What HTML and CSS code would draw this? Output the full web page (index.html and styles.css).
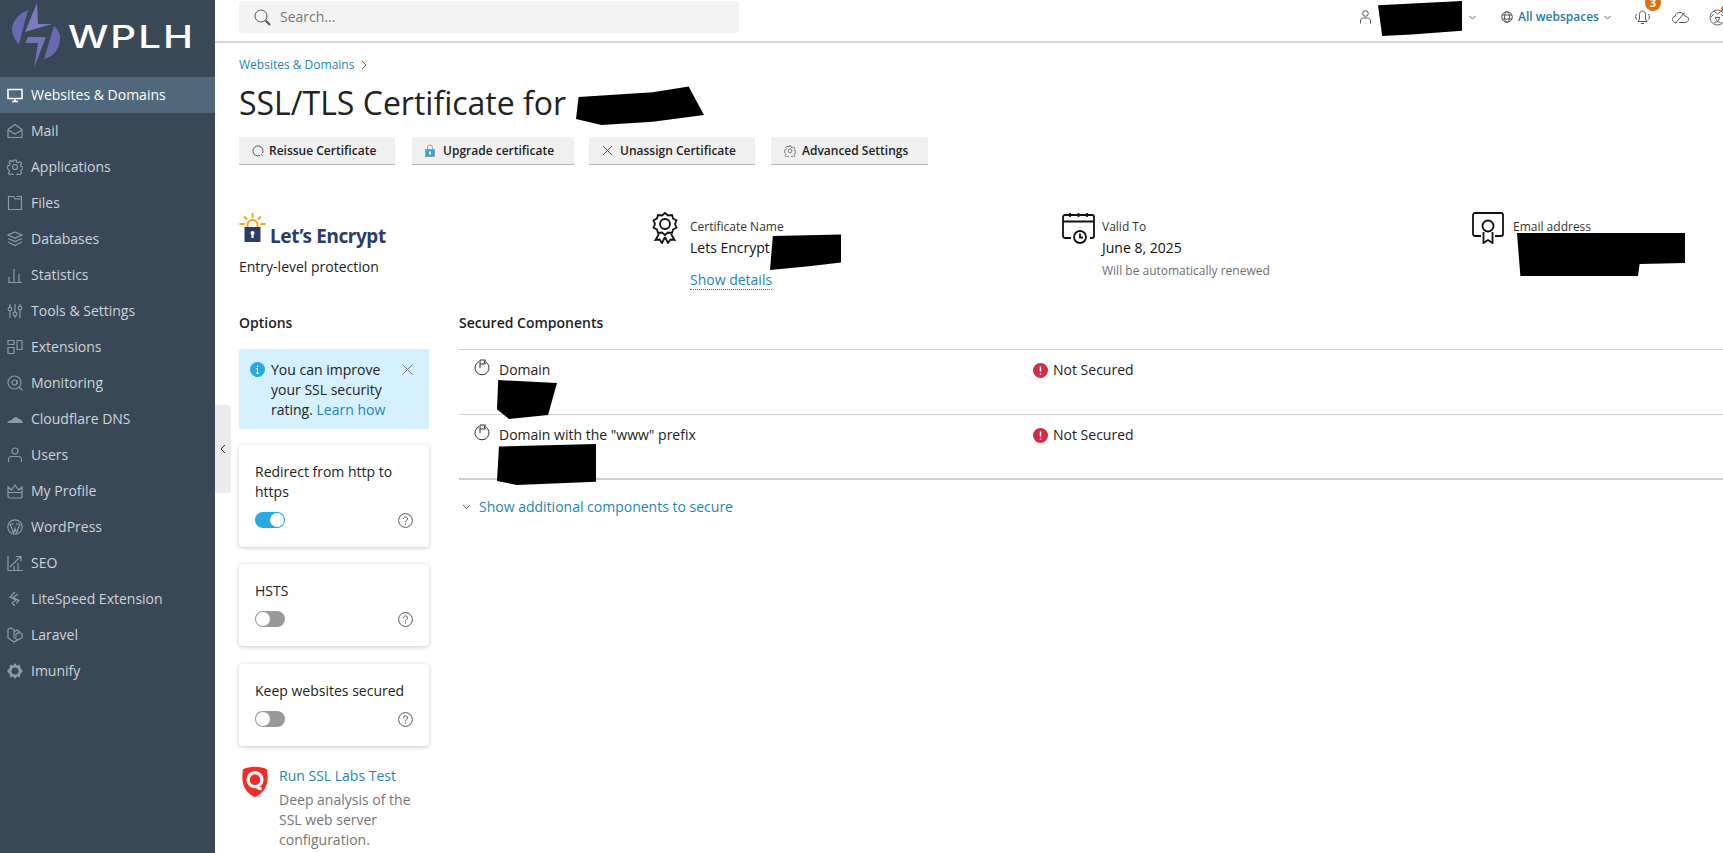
FILE: index.html
```html
<!DOCTYPE html>
<html lang="en">
<head>
    <meta charset="UTF-8">
    <meta name="viewport" content="width=device-width, initial-scale=1.0">
    <title>SSL/TLS Certificate</title>
    <link rel="stylesheet" href="styles.css">
</head>
<body>
    <aside class="sidebar">
        <div class="logo">
            <svg class="logo-mark" width="56" height="68" viewBox="0 0 56 68">
                <path d="M17 7C7 11 1 19 1 27c0 5 3 11 7 14L17 7z" fill="#6a68b0"/>
                <path d="M43 23c4 3 6 7 6 12 0 11-7 19-16 21l10-33z" fill="#6a68b0"/>
                <path d="M26 0l1 21h14L14 29 26 0z" fill="#7d7abb"/>
                <path d="M17 34h18L23 65l4-25H14z" fill="#7471b5"/>
            </svg>
            <span class="logo-text">WPLH</span>
        </div>
        <nav class="nav">
            <a class="nav-item active"><svg viewBox="0 0 16 16"><path d="M1 2.5h14v9H1zM5 14.5h6M8 12v2"/></svg>Websites &amp; Domains</a>
            <a class="nav-item"><svg viewBox="0 0 16 16"><path d="M1 6.5L8 1.5l7 5v8H1zM1 7l7 4 7-4"/></svg>Mail</a>
            <a class="nav-item"><svg viewBox="0 0 16 16"><circle cx="8" cy="8" r="2.5"/><path d="M6.8 1h2.4l.4 2 1.5.7 1.8-1 1.6 1.7-1 1.7.7 1.5 1.8.5v2.4l-1.8.5-.7 1.5 1 1.7-1.6 1.7-1.8-1-1.5.7-.4 1.8H6.8l-.4-1.8-1.5-.7-1.8 1-1.6-1.7 1-1.7-.7-1.5L.5 9.3V6.9l1.8-.5.7-1.5-1-1.7 1.6-1.7 1.8 1 1.5-.7z"/></svg>Applications</a>
            <a class="nav-item"><svg viewBox="0 0 16 16"><path d="M1.5 1.5h5L8 4h6.5v10.500h-13zM9.500 1.500h5v2"/></svg>Files</a>
            <a class="nav-item"><svg viewBox="0 0 16 16"><path d="M8 1l7 3-7 3-7-3zM1 7.5l7 3 7-3M1 11l7 3.500 7-3.500"/></svg>Databases</a>
            <a class="nav-item"><svg viewBox="0 0 16 16"><path d="M2 15v-5M7 15V2M12 15V7M1 15.500h14"/></svg>Statistics</a>
            <a class="nav-item"><svg viewBox="0 0 16 16"><path d="M3 1v3M3 8v7M8 1v8M8 13v2M13 1v2M13 7v8"/><circle cx="3" cy="6" r="1.8"/><circle cx="8" cy="11" r="1.8"/><circle cx="13" cy="5" r="1.8"/></svg>Tools &amp; Settings</a>
            <a class="nav-item"><svg viewBox="0 0 16 16"><path d="M1 1.500h6v4H1zM1 8.500h6v6H1zM10 1.500h5v9h-5z"/></svg>Extensions</a>
            <a class="nav-item"><svg viewBox="0 0 16 16"><circle cx="7.5" cy="7.5" r="6.5"/><circle cx="7.5" cy="7.5" r="2.5"/><path d="M10 5v4M12 12l3.500 3.500"/></svg>Monitoring</a>
            <a class="nav-item"><svg viewBox="0 0 16 16"><path class="fill" d="M0 12c1-2 3-3 5-3 1-3 5-4 7-1 2 0 3.500 2 4 4z"/></svg>Cloudflare DNS</a>
            <a class="nav-item"><svg viewBox="0 0 16 16"><circle cx="8" cy="4" r="3"/><path d="M1.500 15v-2.500c0-2 1.500-3 3.500-3h6c2 0 3.500 1 3.500 3V15"/></svg>Users</a>
            <a class="nav-item"><svg viewBox="0 0 16 16"><path d="M1 4l3.500 3L8 2l3.500 5L15 4v9c0 1-1 2-2 2H3c-1 0-2-1-2-2zM1 9.500h14"/></svg>My Profile</a>
            <a class="nav-item"><svg viewBox="0 0 16 16"><circle cx="8" cy="8" r="7.2"/><path d="M3 5l3.500 9L8 9.500 9.500 14 13 5M2.500 5h4M9 5h4"/></svg>WordPress</a>
            <a class="nav-item"><svg viewBox="0 0 16 16"><path d="M1 1v14.500h15M3 12l10-10M9 1.500h5v5M7 15v-4M11 15V8"/></svg>SEO</a>
            <a class="nav-item"><svg viewBox="0 0 16 16"><path d="M8 1L3 6l6 3-4 3 3 3M11 3L6 6.500l6 3-3 3"/></svg>LiteSpeed Extension</a>
            <a class="nav-item"><svg viewBox="0 0 16 16"><path d="M1 2l3-1 3 1.500v8l4 2.500 4-2.500V7l-3-1.500L9 7v3M1 2v9l6 4 4-2M7 5l3-2 3 2"/></svg>Laravel</a>
            <a class="nav-item"><svg viewBox="0 0 16 16"><path class="fill" d="M8 0l1.800 2.500 3-.8.500 3L16 8l-2.700 3.300-.5 3-3-.8L8 16l-1.800-2.500-3 .8-.5-3L0 8l2.700-3.300.5-3 3 .8z"/><circle class="hole" cx="8" cy="8" r="3.5"/></svg>Imunify</a>
        </nav>
    </aside>

    <button class="collapse" aria-label="Collapse">
        <svg width="6" height="10" viewBox="0 0 6 10"><path d="M5 1L1 5l4 4"/></svg>
    </button>

    <div class="main">
        <header class="topbar">
            <div class="search">
                <svg width="17" height="17" viewBox="0 0 17 17"><circle cx="7" cy="7" r="6"/><path d="M11.500 11.500l4.500 4.500" stroke-width="2"/></svg>
                <span>Search...</span>
            </div>
            <div class="top-actions">
                <div class="user">
                    <svg width="11" height="14" viewBox="0 0 11 14"><circle cx="5.5" cy="3.5" r="2.8"/><path d="M.5 13.500v-2.500c0-2 1.500-3 3-3h4c1.500 0 3 1 3 3v2.500"/></svg>
                    <span class="user-name"><i class="scribble scribble-user"></i></span>
                    <svg class="chev" width="7" height="5" viewBox="0 0 7 5"><path d="M.5 1l3 3 3-3"/></svg>
                </div>
                <a class="webspaces">
                    <svg width="12" height="12" viewBox="0 0 12 12"><circle cx="6" cy="6" r="5.3"/><ellipse cx="6" cy="6" rx="2.5" ry="5.3"/><path d="M1 4h10M1 8h10"/></svg>
                    All webspaces
                    <svg class="chev" width="7" height="5" viewBox="0 0 7 5"><path d="M.5 1l3 3 3-3"/></svg>
                </a>
                <div class="bell">
                    <svg width="17" height="15" viewBox="0 0 17 15"><path d="M8.500 1c-2 0-3 1.500-3 3.500V9l-1.500 2.500h9L11.500 9V4.500c0-2-1-3.500-3-3.500zM7 13.500h3M2.500 4C1.300 5.500 1.300 8 2.500 9.500M14.500 4c1.200 1.500 1.200 4 0 5.500"/></svg>
                    <span class="badge">3</span>
                </div>
                <svg class="top-icon" width="17" height="13" viewBox="0 0 17 13"><path d="M5 11.500H4c-2 0-3.500-1.300-3.500-3s1-2.800 2.500-3C3.500 3 5.500 1.500 8 1.500c2.500 0 4 1.500 4.500 3.500 2.500 0 4 1.500 4 3.300s-1.500 3.200-3.500 3.200H7M3.500 12.500l9-11"/></svg>
                <div class="avatar">
                    <svg width="17" height="17" viewBox="0 0 17 17"><circle cx="8.5" cy="8.5" r="7.5"/><path d="M5 2l3.500 3L12 2M2 8l3-3M15 8l-3-3M6 8.500l2.500 4 2.500-4zM5 14l3.500-1.500L12 14"/></svg>
                    <i class="avatar-dot"></i>
                </div>
            </div>
        </header>

        <main class="content">
            <div class="crumbs">
                <a>Websites &amp; Domains</a>
                <svg width="6" height="10" viewBox="0 0 6 10"><path d="M1 1l4 4-4 4"/></svg>
            </div>
            <h1 class="title">SSL/TLS Certificate for <i class="scribble scribble-title"></i></h1>

            <div class="toolbar">
                <button class="btn btn-reissue">
                    <svg width="12" height="12" viewBox="0 0 12 12"><path d="M8 10.500A5 5 0 1 1 10.500 8M10.800 10.800l-1.500-1.500"/></svg>
                    Reissue Certificate
                </button>
                <button class="btn btn-upgrade">
                    <svg width="10" height="13" viewBox="0 0 10 13"><path class="lock-top" d="M2.500 6V3.500a2.500 2.500 0 0 1 5 0V6"/><rect class="lock-body" x="0.5" y="5.5" width="9" height="7"/><rect class="lock-hole" x="4" y="7.5" width="2" height="3"/></svg>
                    Upgrade certificate
                </button>
                <button class="btn btn-unassign">
                    <svg width="11" height="11" viewBox="0 0 11 11"><path d="M1 1l9 9M10 1l-9 9"/></svg>
                    Unassign Certificate
                </button>
                <button class="btn btn-advanced">
                    <svg width="12" height="12" viewBox="0 0 16 16"><circle cx="8" cy="8" r="2.5"/><path d="M6.8 1h2.4l.4 2 1.5.7 1.8-1 1.6 1.7-1 1.7.7 1.5 1.8.5v2.4l-1.8.5-.7 1.5 1 1.7-1.6 1.7-1.8-1-1.5.7-.4 1.8H6.8l-.4-1.8-1.5-.7-1.8 1-1.6-1.7 1-1.7-.7-1.5L.5 9.3V6.9l1.8-.5.7-1.5-1-1.7 1.6-1.7 1.8 1 1.5-.7z"/></svg>
                    Advanced Settings
                </button>
            </div>

            <section class="summary">
                <div class="brand">
                    <div class="le-logo">
                        <svg width="27" height="30" viewBox="0 0 26 30">
                            <path class="le-rays" d="M13 0v5M4.500 3.500l3 3M21.500 3.500l-3 3M0 11h5M21 11h5"/>
                            <path class="le-arc" d="M8 14v-2a5 5 0 0 1 10 0v2"/>
                            <rect class="le-body" x="5" y="14" width="16" height="15"/>
                            <circle class="le-hole" cx="13" cy="20" r="2"/>
                            <rect class="le-hole" x="12" y="20" width="2" height="5"/>
                        </svg>
                        <span class="le-name">Let’s Encrypt</span>
                    </div>
                    <div class="brand-note">Entry-level protection</div>
                </div>
                <div class="fact fact-cert">
                    <svg width="26" height="32" viewBox="0 0 26 32"><path d="M13 1l3 2.500 4-.5 1 3.500 3.500 2-1.500 3.500 1.500 3.500-3.500 2-1 3.500-4-.5-3 2.500-3-2.500-4 .5-1-3.500-3.500-2L3 12 1.500 8.500l3.500-2 1-3.500 4 .5z"/><circle cx="13" cy="12" r="5"/><path d="M7 22l-3.500 6 4-.5 2.500 3.500 3-6M19 22l3.500 6-4-.5-2.500 3.500-3-6"/></svg>
                    <div class="fact-body">
                        <div class="fact-label">Certificate Name</div>
                        <div class="fact-value">Lets Encrypt<i class="scribble scribble-cert"></i></div>
                        <a class="details">Show details</a>
                    </div>
                </div>
                <div class="fact fact-valid">
                    <svg width="33" height="32" viewBox="0 0 33 32"><path d="M9 26H3c-1 0-2-1-2-2V5c0-1 1-2 2-2h27c1 0 2 1 2 2v19c0 1-1 2-2 2h-2M1 9.500h31M8 1v4M16.500 1v4M25 1v4"/><circle cx="18" cy="25" r="6"/><path d="M18 21.500V25.500h3"/></svg>
                    <div class="fact-body">
                        <div class="fact-label">Valid To</div>
                        <div class="fact-value">June 8, 2025</div>
                        <div class="fact-note">Will be automatically renewed</div>
                    </div>
                </div>
                <div class="fact fact-email">
                    <svg width="32" height="32" viewBox="0 0 32 32"><path d="M9 24H3c-1 0-2-1-2-2V3c0-1 1-2 2-2h26c1 0 2 1 2 2v19c0 1-1 2-2 2h-6"/><circle cx="16" cy="14" r="5.5"/><path d="M11.500 20v11l4.500-3 4.500 3V20"/></svg>
                    <div class="fact-body">
                        <div class="fact-label">Email address</div>
                        <div class="fact-value"><i class="scribble scribble-email"></i></div>
                    </div>
                </div>
            </section>

            <div class="columns">
                <section class="options">
                    <h2 class="heading">Options</h2>
                    <div class="alert">
                        <svg class="alert-icon" width="15" height="15" viewBox="0 0 15 15"><circle cx="7.5" cy="7.5" r="7.5"/><path d="M7.500 6.500v5M6 6.700h1.500M6 11.300h3M7.500 3.500v1.500"/></svg>
                        <p>You can improve your SSL security rating. <a>Learn how</a></p>
                        <svg class="alert-close" width="11" height="11" viewBox="0 0 11 11"><path d="M.5.5l10 10M10.500.5l-10 10"/></svg>
                    </div>

                    <div class="card">
                        <div class="card-title">Redirect from http to https</div>
                        <div class="card-row">
                            <span class="toggle on"></span>
                            <svg class="help" width="15" height="15" viewBox="0 0 15 15"><circle cx="7.5" cy="7.5" r="6.9"/><path d="M5.500 5.800a2 2 0 1 1 3 1.800c-.7.400-1 .8-1 1.600M7.500 10.500v1.200"/></svg>
                        </div>
                    </div>
                    <div class="card">
                        <div class="card-title">HSTS</div>
                        <div class="card-row">
                            <span class="toggle"></span>
                            <svg class="help" width="15" height="15" viewBox="0 0 15 15"><circle cx="7.5" cy="7.5" r="6.9"/><path d="M5.500 5.800a2 2 0 1 1 3 1.800c-.7.400-1 .8-1 1.600M7.500 10.500v1.200"/></svg>
                        </div>
                    </div>
                    <div class="card">
                        <div class="card-title">Keep websites secured</div>
                        <div class="card-row">
                            <span class="toggle"></span>
                            <svg class="help" width="15" height="15" viewBox="0 0 15 15"><circle cx="7.5" cy="7.5" r="6.9"/><path d="M5.500 5.800a2 2 0 1 1 3 1.800c-.7.400-1 .8-1 1.600M7.500 10.500v1.200"/></svg>
                        </div>
                    </div>

                    <div class="ssl-labs">
                        <svg width="26" height="32" viewBox="0 0 28 33"><path class="shield" d="M14 0C9 0 4 1 1 3c-1 8-1 14 2 20 2 4 6 8 11 10 5-2 9-6 11-10 3-6 3-12 2-20-3-2-8-3-13-3z"/><circle class="ring" cx="14" cy="14" r="7.5"/><path class="tail" d="M15 21c2 2 4 3 6 3"/></svg>
                        <div>
                            <a class="ssl-link">Run SSL Labs Test</a>
                            <p>Deep analysis of the SSL web server configuration.</p>
                        </div>
                    </div>
                </section>

                <section class="components">
                    <h2 class="heading">Secured Components</h2>
                    <div class="comp-table">
                        <div class="comp-row">
                            <div class="comp-name">
                                <svg width="16" height="17" viewBox="0 0 16 17"><path d="M5 2.500A7 7 0 1 0 11 2.500M6 9V1h5.500l-1.500 2 1.500 2H6"/></svg>
                                <div>Domain<i class="scribble scribble-domain"></i></div>
                            </div>
                            <div class="comp-status">
                                <svg width="15" height="15" viewBox="0 0 15 15"><circle cx="7.5" cy="7.5" r="7.5"/><path d="M7.500 3.500v5M7.500 10.500v1.200"/></svg>
                                Not Secured
                            </div>
                        </div>
                        <div class="comp-row">
                            <div class="comp-name">
                                <svg width="16" height="17" viewBox="0 0 16 17"><path d="M5 2.500A7 7 0 1 0 11 2.500M6 9V1h5.500l-1.500 2 1.500 2H6"/></svg>
                                <div>Domain with the "www" prefix<i class="scribble scribble-www"></i></div>
                            </div>
                            <div class="comp-status">
                                <svg width="15" height="15" viewBox="0 0 15 15"><circle cx="7.5" cy="7.5" r="7.5"/><path d="M7.500 3.500v5M7.500 10.500v1.200"/></svg>
                                Not Secured
                            </div>
                        </div>
                    </div>
                    <a class="more">
                        <svg width="9" height="6" viewBox="0 0 9 6"><path d="M1 1l3.500 3.500L8 1"/></svg>
                        Show additional components to secure
                    </a>
                </section>
            </div>
        </main>
    </div>
</body>
</html>
```

FILE: styles.css
```css
* {
    box-sizing: border-box;
}
html, body {
    height: 100%;
}
body {
    margin: 0;
    display: flex;
    height: 100vh;
    overflow: hidden;
    position: relative;
    font-family: "Open Sans", Arial, sans-serif;
    font-size: 14px;
    line-height: 20px;
    color: #222;
    background: #fff;
}
a {
    color: #1d86b5;
    text-decoration: none;
}
svg {
    fill: none;
    stroke: currentColor;
    flex: none;
}
i {
    font-style: normal;
}

/* sidebar */
.sidebar {
    width: 215px;
    flex: none;
    background: #394857;
    color: #cdd3d8;
}
.logo {
    height: 77px;
    display: flex;
    align-items: flex-start;
    padding: 3px 0 0 11px;
}
.logo-mark {
    stroke: none;
}
.logo-text {
    margin: 15px 0 0 1px;
    color: #fff;
    font-family: Inter, "Liberation Sans", sans-serif;
    font-size: 31px;
    line-height: 38px;
    font-weight: 500;
    letter-spacing: 1.5px;
    transform: scaleX(1.3);
    transform-origin: left;
}
.nav-item {
    height: 36px;
    display: flex;
    align-items: center;
    gap: 8px;
    padding-left: 7px;
    color: #cdd3d8;
}
.nav-item svg {
    width: 16px;
    height: 16px;
    stroke: #8f9aa5;
    stroke-width: 1.2;
}
.nav-item svg .fill {
    fill: #8f9aa5;
    stroke: none;
}
.nav-item svg .hole {
    fill: #394857;
    stroke: none;
}
.nav-item.active {
    background: #50687c;
    color: #fff;
}
.nav-item.active svg {
    stroke: #fff;
    stroke-width: 1.6;
}
.collapse {
    position: absolute;
    left: 215px;
    top: 405px;
    width: 16px;
    height: 88px;
    padding: 0;
    border: 0;
    border-radius: 0 4px 4px 0;
    background: #ebebeb;
    color: #333;
}

/* top bar */
.main {
    flex: 1;
    min-width: 0;
    display: flex;
    flex-direction: column;
}
.topbar {
    height: 43px;
    flex: none;
    display: flex;
    justify-content: space-between;
    padding: 1px 0 0 24px;
    border-bottom: 2px solid #d4d4d4;
}
.search {
    width: 500px;
    height: 32px;
    display: flex;
    align-items: center;
    gap: 9px;
    padding-left: 15px;
    background: #f3f3f3;
    border-radius: 4px;
    color: #777;
}
.search svg {
    color: #555;
}
.top-actions {
    display: flex;
    align-items: flex-start;
    padding-top: 9px;
    margin-right: -3px;
    font-size: 12px;
}
.user {
    display: flex;
    align-items: center;
    width: 125px;
    height: 16px;
    margin-top: -1px;
    color: #555;
}
.user-name {
    width: 98px;
    height: 16px;
    position: relative;
    flex: none;
}
.chev {
    color: #666;
}
.webspaces {
    display: flex;
    align-items: center;
    gap: 5px;
    width: 124px;
    height: 16px;
    margin: -1px 0 0 16px;
    color: #2a7ba3;
    font-weight: 600;
}
.webspaces svg:first-child {
    color: #555;
}
.bell {
    position: relative;
    width: 17px;
    height: 15px;
    color: #555;
    margin-left: 9px;
}
.badge {
    position: absolute;
    left: 11px;
    top: -15px;
    width: 16px;
    height: 16px;
    border-radius: 50%;
    background: #dc6f10;
    color: #fff;
    font-size: 11px;
    font-weight: 700;
    line-height: 16px;
    text-align: center;
}
.top-icon {
    color: #555;
    margin: 1px 0 0 21px;
}
.avatar {
    position: relative;
    margin-left: 20px;
    width: 17px;
    color: #666;
}
.avatar svg {
    margin-top: -1px;
}
.avatar-dot {
    position: absolute;
    right: -1px;
    top: -4px;
    width: 6px;
    height: 6px;
    border-radius: 50%;
    background: #dc6f10;
}

/* page head */
.content {
    padding: 13px 0 0 24px;
}
.crumbs {
    display: flex;
    align-items: center;
    gap: 7px;
    font-size: 12px;
    line-height: 18px;
    color: #666;
}
.title {
    margin: 7px 0 0;
    font-size: 32px;
    line-height: 44px;
    font-weight: 400;
    color: #222;
    position: relative;
}
.toolbar {
    display: flex;
    margin-top: 12px;
}
.btn {
    height: 28px;
    display: flex;
    align-items: center;
    gap: 5px;
    padding: 0 0 0 13px;
    border: 0;
    border-bottom: 1px solid #b5b5b5;
    border-radius: 2px 2px 0 0;
    background: #f0f0f0;
    color: #222;
    font-family: inherit;
    font-size: 12px;
    font-weight: 600;
}
.btn svg {
    color: #555;
}
.btn-reissue {
    width: 156px;
}
.btn-upgrade {
    width: 162px;
    margin-left: 17px;
    gap: 8px;
}
.btn-unassign {
    width: 166px;
    margin-left: 15px;
    gap: 7px;
}
.btn-advanced {
    width: 157px;
    margin-left: 16px;
    gap: 6px;
}
.btn .lock-top {
    stroke: #8aa0b0;
}
.btn .lock-body {
    fill: #2ea6dc;
    stroke: #8aa0b0;
}
.btn .lock-hole {
    fill: #fff;
    stroke: none;
}

/* certificate summary */
.summary {
    display: flex;
    margin-top: 47px;
    height: 77px;
}
.brand {
    width: 413px;
    flex: none;
}
.le-logo {
    display: flex;
    align-items: flex-start;
    gap: 4px;
    height: 33px;
    padding-top: 1px;
}
.le-rays, .le-arc {
    stroke: #f7a41d;
    stroke-width: 2;
}
.le-body {
    fill: #2c3c69;
    stroke: none;
}
.le-hole {
    fill: #fff;
    stroke: none;
}
.le-name {
    margin-top: 9px;
    font-family: "Noto Sans", "Open Sans", sans-serif;
    font-size: 19px;
    line-height: 28px;
    font-weight: 700;
    color: #2c3c69;
    letter-spacing: -.4px;
}
.brand-note {
    margin-top: 12px;
}
.fact {
    display: flex;
    gap: 11px;
    color: #111;
}
.fact svg {
    stroke-width: 1.8;
}
.fact-cert {
    width: 410px;
}
.fact-cert svg {
    margin-right: 1px;
}
.fact-valid {
    width: 410px;
    gap: 7px;
}
.fact-email {
    gap: 9px;
}
.fact-label {
    font-size: 12px;
    line-height: 16px;
    margin-top: 7px;
    color: #333;
}
.fact-value {
    margin-top: 3px;
    position: relative;
    white-space: nowrap;
}
.fact-note {
    margin-top: 5px;
    font-size: 12px;
    line-height: 16px;
    color: #6e6e6e;
}
.details {
    display: inline-block;
    margin-top: 13px;
    line-height: 18px;
    border-bottom: 1px dotted #1d86b5;
}

/* options and components */
.columns {
    display: flex;
    margin-top: 24px;
}
.heading {
    margin: 0;
    font-size: 14px;
    line-height: 20px;
    font-weight: 600;
    color: #222;
}
.options {
    width: 190px;
    flex: none;
}
.alert {
    display: flex;
    gap: 6px;
    height: 80px;
    margin-top: 16px;
    padding: 11px 10px 0 11px;
    background: #d5f0ff;
    border-radius: 2px;
}
.alert p {
    margin: 0;
    width: 122px;
    flex: none;
}
.alert-icon {
    margin-top: 2px;
    fill: #28a9e0;
    stroke: #fff;
}
.alert-icon circle {
    stroke: none;
}
.alert-close {
    margin: 4px 0 0 3px;
    color: #777;
}
.card {
    margin-top: 18px;
    padding: 17px 16px 19px;
    background: #fff;
    border-radius: 4px;
    box-shadow: 0 1px 4px rgba(0, 0, 0, .22);
}
.alert + .card {
    margin: 16px 0 -1px;
}
.card-row {
    display: flex;
    align-items: center;
    justify-content: space-between;
    height: 16px;
    margin-top: 10px;
}
.toggle {
    position: relative;
    width: 30px;
    height: 16px;
    border-radius: 8px;
    background: #999;
}
.toggle:before {
    content: "";
    position: absolute;
    left: 1px;
    top: 1px;
    width: 14px;
    height: 14px;
    border-radius: 50%;
    background: #fff;
}
.toggle.on {
    background: #28a9e0;
}
.toggle.on:before {
    left: 15px;
}
.help {
    color: #555;
}
.ssl-labs {
    display: flex;
    gap: 11px;
    margin-top: 20px;
    padding-left: 3px;
}
.ssl-labs svg {
    stroke: none;
}
.shield {
    fill: #ed2e26;
}
.ssl-labs .ring {
    fill: none;
    stroke: #fff;
    stroke-width: 3.5;
}
.ssl-labs .tail {
    stroke: #fff;
    stroke-width: 3;
}
.ssl-link {
    display: block;
}
.ssl-labs p {
    margin: 4px 0 0;
    color: #767676;
}
.components {
    flex: 1;
    margin-left: 30px;
}
.comp-table {
    margin-top: 16px;
    border-top: 1px solid #cfcfcf;
}
.comp-row {
    height: 65px;
    display: flex;
    padding: 10px 0 0 15px;
    border-bottom: 1px solid #cfcfcf;
}
.comp-row:last-child {
    border-bottom-width: 2px;
}
.comp-name {
    width: 559px;
    display: flex;
    gap: 9px;
    color: #222;
}
.comp-name svg {
    color: #333;
    margin-top: -1px;
}
.comp-name > div {
    position: relative;
}
.comp-status {
    display: flex;
    align-items: center;
    gap: 5px;
    height: 20px;
}
.comp-status svg {
    fill: #d02d4b;
    stroke: #fff;
    stroke-width: 1.5;
}
.comp-status circle {
    stroke: none;
}
.more {
    display: inline-flex;
    align-items: center;
    gap: 8px;
    margin: 17px 0 0 3px;
}
.more svg {
    color: #666;
}

/* black marks scribbled over private data */
.scribble {
    position: absolute;
    background: #000;
}
.scribble-user {
    left: 7px;
    top: -8px;
    width: 84px;
    height: 35px;
    clip-path: polygon(0 12%, 100% 0, 100% 85%, 40% 96%, 5% 100%);
}
.scribble-title {
    left: 337px;
    top: 4px;
    width: 128px;
    height: 40px;
    clip-path: polygon(2% 30%, 60% 18%, 88% 4%, 100% 75%, 60% 92%, 20% 100%, 0 85%);
}
.scribble-cert {
    left: 80px;
    top: -5px;
    width: 71px;
    height: 37px;
    clip-path: polygon(4% 8%, 100% 4%, 100% 80%, 55% 90%, 0 100%);
}
.scribble-email {
    left: 4px;
    top: -5px;
    width: 168px;
    height: 43px;
    clip-path: polygon(0 0, 100% 0, 100% 70%, 73% 72%, 72% 100%, 2% 100%);
}
.scribble-domain {
    left: -2px;
    top: 20px;
    width: 60px;
    height: 39px;
    clip-path: polygon(2% 0, 100% 8%, 85% 90%, 20% 100%, 0 75%);
}
.scribble-www {
    left: -2px;
    top: 19px;
    width: 99px;
    height: 41px;
    clip-path: polygon(2% 6%, 100% 0, 100% 92%, 20% 100%, 0 90%);
}
```
